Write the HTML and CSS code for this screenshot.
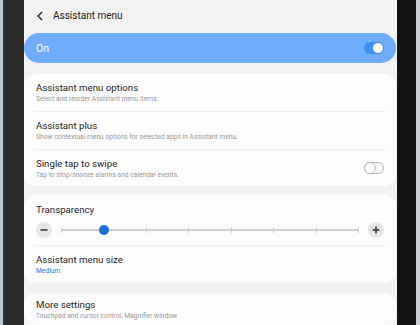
FILE: index.html
```html
<!DOCTYPE html>
<html>
<head>
<meta charset="utf-8">
<link rel="stylesheet" href="styles.css">
</head>
<body>
<div class="device">
  <div class="bezel-left"><div class="edge"></div></div>
  <div class="screen">
    <div class="header">
      <svg class="back" width="8" height="10" viewBox="0 0 8 10"><path d="M6 1 L2 5 L6 9" fill="none" stroke="#222" stroke-width="1.4"/></svg>
      <span class="header-title">Assistant menu</span>
    </div>
    <div class="pill">
      <span class="pill-label">On</span>
      <span class="switch on"><span class="knob"></span></span>
    </div>
    <div class="card">
      <div class="row">
        <div class="title">Assistant menu options</div>
        <div class="sub">Select and reorder Assistant menu items.</div>
      </div>
      <div class="divider"></div>
      <div class="row">
        <div class="title">Assistant plus</div>
        <div class="sub">Show contextual menu options for selected apps in Assistant menu.</div>
      </div>
      <div class="divider"></div>
      <div class="row row-toggle">
        <div class="texts">
          <div class="title">Single tap to swipe</div>
          <div class="sub">Tap to stop/snooze alarms and calendar events.</div>
        </div>
        <span class="switch off"><span class="knob"></span></span>
      </div>
    </div>
    <div class="card card2">
      <div class="row slider-block">
        <div class="title">Transparency</div>
        <div class="slider-row">
          <span class="round-btn"><svg width="10" height="10" viewBox="0 0 10 10"><path d="M1.5 5 H8.5" stroke="#333" stroke-width="1.5"/></svg></span>
          <div class="track">
            <span class="tick"></span><span class="tick"></span><span class="tick"></span><span class="tick"></span><span class="tick"></span><span class="tick"></span><span class="tick"></span><span class="tick"></span>
            <span class="thumb"></span>
          </div>
          <span class="round-btn"><svg width="10" height="10" viewBox="0 0 10 10"><path d="M1.5 5 H8.5 M5 1.5 V8.5" stroke="#333" stroke-width="1.5"/></svg></span>
        </div>
      </div>
      <div class="divider"></div>
      <div class="row size-row">
        <div class="title">Assistant menu size</div>
        <div class="sub blue">Medium</div>
      </div>
    </div>
    <div class="card card3">
      <div class="row">
        <div class="title">More settings</div>
        <div class="sub">Touchpad and cursor control, Magnifier window</div>
      </div>
    </div>
  </div>
  <div class="bezel-right"><div class="edge-r"></div></div>
</div>
</body>
</html>
```

FILE: styles.css
```css
html, body {
  margin: 0;
  padding: 0;
  width: 420px;
  height: 325px;
  overflow: hidden;
  font-family: Roboto, "Noto Sans", sans-serif;
}
.device {
  display: flex;
  height: 325px;
}
.bezel-left {
  width: 24px;
  background: #2a2a2a;
  display: flex;
}
.edge {
  width: 3px;
  background: #b9c6cf;
  border-right: 1px solid #3a3a3a;
}
.screen {
  flex: 1;
  background: #f2f2f2;
  display: flex;
  flex-direction: column;
  padding-right: 1px;
  overflow: hidden;
}
.bezel-right {
  width: 23px;
  background: #111;
  display: flex;
  justify-content: flex-end;
}
.edge-r {
  width: 4px;
  background: #c9ced2;
}
.header {
  height: 33px;
  display: flex;
  align-items: center;
  padding-left: 12px;
  box-sizing: border-box;
  padding-bottom: 2px;
}
.back {
  margin-right: 9px;
}
.header-title {
  font-size: 10px;
  color: #222;
}
.pill {
  height: 30px;
  border-radius: 15px;
  background: #6eabfb;
  display: flex;
  align-items: center;
  justify-content: space-between;
  padding: 0 12px;
}
.pill-label {
  color: #fff;
  font-size: 10.5px;
}
.switch {
  width: 20px;
  height: 12px;
  border-radius: 6px;
  position: relative;
  box-sizing: border-box;
}
.switch.on {
  background: #3d8ef2;
}
.switch.on .knob {
  position: absolute;
  right: 0;
  top: 0;
  width: 12px;
  height: 12px;
  border-radius: 50%;
  background: #fff;
  box-sizing: border-box;
  border: 1.5px solid #3d8ef2;
}
.switch.off {
  border: 1px solid #b5b5b5;
  background: #fcfcfc;
}
.switch.off .knob {
  position: absolute;
  left: -1px;
  top: -1px;
  width: 12px;
  height: 12px;
  border-radius: 50%;
  box-sizing: border-box;
  border: 1px solid #b5b5b5;
  background: #fcfcfc;
}
.card {
  background: #fcfcfc;
  border-radius: 12px;
  margin-top: 11px;
  display: flex;
  flex-direction: column;
}
.card2 { margin-top: 9px; }
.card3 { margin-top: 10px; }
.row {
  padding: 0 12px;
  display: flex;
  flex-direction: column;
  justify-content: center;
  height: 37px;
}
.row-toggle {
  flex-direction: row;
  align-items: center;
  justify-content: space-between;
  height: 36px;
}
.title {
  font-size: 9.7px;
  color: #262626;
  line-height: 13px;
}
.sub {
  font-size: 6.7px;
  color: #9a9a9a;
  line-height: 9px;
  margin-top: 1px;
}
.sub.blue {
  color: #2a7fdd;
}
.divider {
  height: 1px;
  background: #eeeeee;
  margin: 0 10px;
}
.slider-block {
  height: 50px;
  justify-content: flex-start;
  padding-top: 8px;
  box-sizing: border-box;
}
.slider-row {
  display: flex;
  align-items: center;
  margin-top: 6px;
}
.round-btn {
  width: 16px;
  height: 16px;
  border-radius: 50%;
  background: #e6e6e6;
  display: flex;
  align-items: center;
  justify-content: center;
}
.track {
  flex: 1;
  height: 2px;
  background: #d0d0d0;
  margin: 0 9px;
  position: relative;
  display: flex;
  justify-content: space-between;
  align-items: center;
}
.tick {
  width: 1px;
  height: 6px;
  background: #d0d0d0;
}
.thumb {
  position: absolute;
  left: calc(100% / 7 - 4.5px);
  top: -4px;
  width: 10px;
  height: 10px;
  border-radius: 50%;
  background: #1c6fd8;
}
.size-row {
  height: 37px;
}
.card3 .row {
  height: 32px;
}
```
